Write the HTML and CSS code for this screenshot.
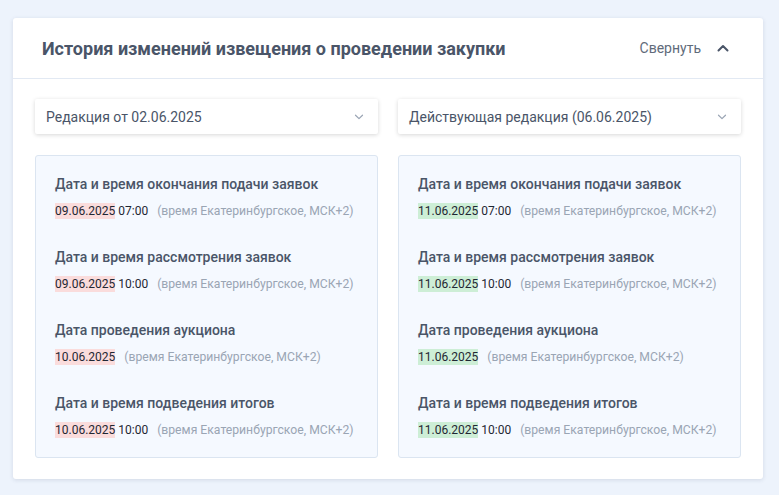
FILE: index.html
```html
<!DOCTYPE html>
<html lang="ru">
<head>
<meta charset="utf-8">
<link rel="stylesheet" href="styles.css">
</head>
<body>
<div class="card">
  <div class="card-header">
    <h2 class="title">История изменений извещения о проведении закупки</h2>
    <button class="collapse">Свернуть
      <svg class="chev-up" width="12" height="8" viewBox="0 0 12 8"><path d="M1.5 6.5 L6 2 L10.5 6.5" fill="none" stroke="#4a5568" stroke-width="2" stroke-linecap="round" stroke-linejoin="round"/></svg>
    </button>
  </div>
  <div class="card-body">
    <div class="column">
      <div class="select">
        <span>Редакция от 02.06.2025</span>
        <svg width="10" height="6" viewBox="0 0 10 6"><path d="M1.5 1.2 L5 4.6 L8.5 1.2" fill="none" stroke="#9aa5b4" stroke-width="1.2" stroke-linecap="round" stroke-linejoin="round"/></svg>
      </div>
      <div class="panel">
        <div class="item">
          <div class="label">Дата и время окончания подачи заявок</div>
          <div class="value"><span class="date old">09.06.2025</span> 07:00<span class="tz">(время Екатеринбургское, МСК+2)</span></div>
        </div>
        <div class="item">
          <div class="label">Дата и время рассмотрения заявок</div>
          <div class="value"><span class="date old">09.06.2025</span> 10:00<span class="tz">(время Екатеринбургское, МСК+2)</span></div>
        </div>
        <div class="item">
          <div class="label">Дата проведения аукциона</div>
          <div class="value"><span class="date old">10.06.2025</span><span class="tz">(время Екатеринбургское, МСК+2)</span></div>
        </div>
        <div class="item">
          <div class="label">Дата и время подведения итогов</div>
          <div class="value"><span class="date old">10.06.2025</span> 10:00<span class="tz">(время Екатеринбургское, МСК+2)</span></div>
        </div>
      </div>
    </div>
    <div class="column">
      <div class="select">
        <span>Действующая редакция (06.06.2025)</span>
        <svg width="10" height="6" viewBox="0 0 10 6"><path d="M1.5 1.2 L5 4.6 L8.5 1.2" fill="none" stroke="#9aa5b4" stroke-width="1.2" stroke-linecap="round" stroke-linejoin="round"/></svg>
      </div>
      <div class="panel">
        <div class="item">
          <div class="label">Дата и время окончания подачи заявок</div>
          <div class="value"><span class="date new">11.06.2025</span> 07:00<span class="tz">(время Екатеринбургское, МСК+2)</span></div>
        </div>
        <div class="item">
          <div class="label">Дата и время рассмотрения заявок</div>
          <div class="value"><span class="date new">11.06.2025</span> 10:00<span class="tz">(время Екатеринбургское, МСК+2)</span></div>
        </div>
        <div class="item">
          <div class="label">Дата проведения аукциона</div>
          <div class="value"><span class="date new">11.06.2025</span><span class="tz">(время Екатеринбургское, МСК+2)</span></div>
        </div>
        <div class="item">
          <div class="label">Дата и время подведения итогов</div>
          <div class="value"><span class="date new">11.06.2025</span> 10:00<span class="tz">(время Екатеринбургское, МСК+2)</span></div>
        </div>
      </div>
    </div>
  </div>
</div>
</body>
</html>
```
FILE: styles.css
```css
* { box-sizing: border-box; }
html, body { margin: 0; padding: 0; }
body {
  background: #edf3fc;
  font-family: Roboto, "Liberation Sans", sans-serif;
  padding: 18px 16px 16px 13px;
}
.card {
  width: 750px;
  background: #fff;
  border-radius: 3px;
  box-shadow: 0 1px 4px rgba(40, 60, 90, 0.14);
}
.card-header {
  height: 61px;
  border-bottom: 1px solid #e2e9f3;
  display: flex;
  align-items: center;
  justify-content: space-between;
  padding: 0 34px 0 29px;
}
.title {
  margin: 0;
  font-size: 18px;
  font-weight: 700;
  color: #4a5568;
  letter-spacing: 0;
}
.collapse {
  border: none;
  background: none;
  padding: 0;
  font-family: inherit;
  font-size: 14px;
  color: #5f6b7a;
  display: flex;
  align-items: center;
  gap: 16px;
}
.card-body {
  display: grid;
  grid-template-columns: 343px 343px;
  column-gap: 20px;
  padding: 20px 21px 21px 22px;
}
.column { display: flex; flex-direction: column; gap: 21px; }
.select {
  height: 35px;
  background: #fff;
  box-shadow: 0 1px 4px rgba(0, 0, 0, 0.16);
  border-radius: 2px;
  display: flex;
  align-items: center;
  justify-content: space-between;
  padding: 0 14px 0 11px;
  font-size: 14px;
  color: #4a5568;
}
.panel {
  background: #f5f9ff;
  border: 1px solid #dbe5f1;
  border-radius: 3px;
  padding: 18px 19px 18px 19px;
  display: flex;
  flex-direction: column;
  gap: 27px;
}
.label {
  font-size: 14px;
  font-weight: 500;
  line-height: 20px;
  color: #4a5568;
}
.value {
  margin-top: 8px;
  font-size: 12px;
  line-height: 18px;
  color: #1f2733;
}
.date { padding: 1px 0; }
.date.old { background: #fadcdc; }
.date.new { background: #cdeed6; }
.tz { color: #9aa5b4; margin-left: 9px; font-size: 12.2px; }
```
